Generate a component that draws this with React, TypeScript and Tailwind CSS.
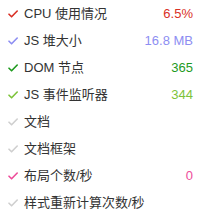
import React from 'react';

interface Metric {
  label: string;
  value?: string;
  color: string;
  on: boolean;
}

const METRICS: Metric[] = [
  { label: 'CPU 使用情况', value: '6.5%', color: '#d93025', on: true },
  { label: 'JS 堆大小', value: '16.8 MB', color: '#8d8ef2', on: true },
  { label: 'DOM 节点', value: '365', color: '#1e9a1e', on: true },
  { label: 'JS 事件监听器', value: '344', color: '#7dc33a', on: true },
  { label: '文档', color: '#cfcfcf', on: false },
  { label: '文档框架', color: '#cfcfcf', on: false },
  { label: '布局个数/秒', value: '0', color: '#ee4d9b', on: true },
  { label: '样式重新计算次数/秒', color: '#cfcfcf', on: false },
];

function Check({ color }: { color: string }) {
  return (
    <svg width="10" height="8" viewBox="0 0 10 8" className="shrink-0">
      <path d="M1 4.2 L3.6 6.8 L9.2 1" fill="none" stroke={color} strokeWidth="1.6" strokeLinecap="round" strokeLinejoin="round" />
    </svg>
  );
}

export default function App() {
  return (
    <div
      className="w-[202px] h-[218px] bg-white overflow-hidden"
      style={{ fontFamily: '"Liberation Sans", "Noto Sans CJK SC", sans-serif' }}
    >
      {METRICS.map((m) => (
        <div key={m.label} className="h-[27px] flex items-center pl-[8px] pr-[9px]">
          <Check color={m.color} />
          <span className="ml-[6px] text-[13px] text-[#333] whitespace-nowrap">{m.label}</span>
          {m.value && (
            <span className="ml-auto text-[13px] whitespace-nowrap" style={{ color: m.color }}>
              {m.value}
            </span>
          )}
        </div>
      ))}
    </div>
  );
}
